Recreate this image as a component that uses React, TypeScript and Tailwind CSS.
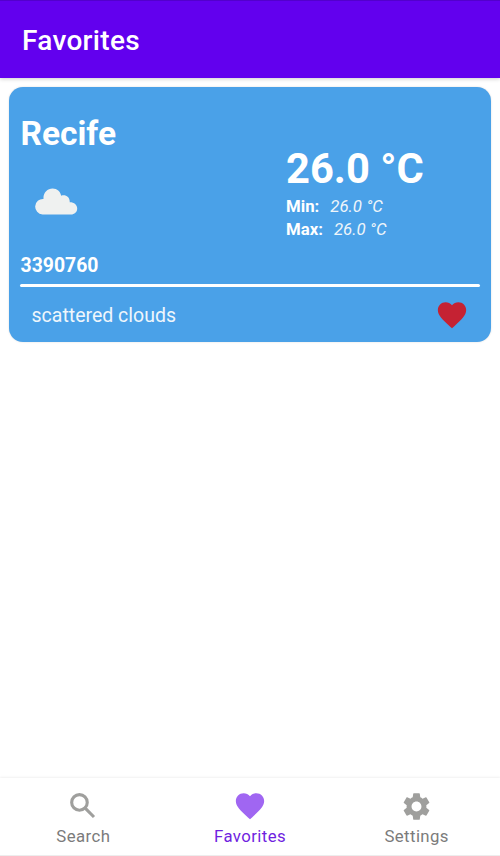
import type { ReactNode } from 'react';
import { MdFavorite, MdSettings } from 'react-icons/md';

function CloudIcon() {
  return (
    <svg width="43" height="27" viewBox="0 0 43 27" fill="#eff1f0" aria-hidden="true">
      <path d="M7.500 26.500A7.800 7.800 0 0 1 8.500 10.900C8 4.800 12.300.4 17.600.4c4.500 0 7.700 2.900 8.600 7.300 4.300-1.600 9 1.300 8.500 6.600 4.300-.1 7.500 2.500 7.500 6.200 0 3.500-2.700 6-6.400 6z" />
    </svg>
  );
}

function SearchIcon() {
  return (
    <svg className="size-[34px]" viewBox="0 0 24 24" fill="none" stroke="currentColor" strokeWidth="2.2" aria-hidden="true">
      <circle cx="9.5" cy="9.5" r="5.5" />
      <path d="M13.700 13.700l6.050 6.050" />
    </svg>
  );
}

function Range({ label, value }: { label: string; value: string }) {
  return (
    <div className="flex h-[23px] items-center gap-[11px] whitespace-nowrap text-[16.8px] leading-[23px]">
      <span className="font-bold">{label}</span>
      <span className="italic text-[#eef5fa]">{value}</span>
    </div>
  );
}

function WeatherCard() {
  return (
    <section className="ml-[9px] mr-[9.5px] mt-[9px] flex h-[255px] flex-col rounded-[14px] bg-[#4aa1e8] px-[11px] text-white shadow-[0_0_2px_rgba(0,0,0,0.15)]">
      <div className="flex h-[197px]">
        <div className="flex w-[266px] flex-col">
          <h2 className="mt-[27px] h-10 pl-[0.5px] text-[33.5px] font-bold leading-10">Recife</h2>
          <div className="ml-[15px] mt-[33.5px] h-[27px]">
            <CloudIcon />
          </div>
          <p className="mt-[39px] pl-[0.5px] text-[19.4px] font-bold leading-6">3390760</p>
        </div>
        <div className="flex flex-col">
          <p className="mt-[56px] h-[52px] whitespace-nowrap text-[41.7px] font-bold leading-[52px]">26.0 °C</p>
          <Range label="Min:" value="26.0 °C" />
          <Range label="Max:" value="26.0 °C" />
        </div>
      </div>
      <div className="h-[3px] rounded-full bg-white" />
      <div className="flex flex-1 items-center justify-between pl-[11.5px] pr-[11px]">
        <span className="pt-0.5 text-[19.5px] text-[#eef6fc]">scattered clouds</span>
        <MdFavorite className="size-[34px] text-[#c52233]" />
      </div>
    </section>
  );
}

function Tab({ icon, label, active = false }: { icon: ReactNode; label: string; active?: boolean }) {
  return (
    <button className={`flex flex-1 flex-col items-center pt-[11px] ${active ? 'text-[#a066f2]' : 'text-[#9f9f9d]'}`}>
      <span className="flex h-[34px] items-center">{icon}</span>
      <span
        className={`mt-[2px] text-[16.8px] leading-[22px] tracking-[0.4px] ${active ? 'text-[#701fdf]' : 'text-[#7b7b7b]'}`}
      >
        {label}
      </span>
    </button>
  );
}

export default function App() {
  return (
    <div className="flex h-[856px] w-[500px] flex-col overflow-hidden bg-white font-['Roboto',sans-serif]">
      <header className="flex h-[78px] shrink-0 items-center border-t border-[#5300cc] bg-[#6200ee] pl-[22px] pt-[3px] text-white shadow-[0_1px_4px_rgba(0,0,0,0.2)]">
        <h1 className="text-[28px] font-medium tracking-[0.3px]">Favorites</h1>
      </header>
      <main className="flex-1">
        <WeatherCard />
      </main>
      <nav className="flex h-[78px] shrink-0 border-b border-[#ededed] bg-white shadow-[0_-1px_2px_rgba(0,0,0,0.06)]">
        <Tab icon={<SearchIcon />} label="Search" />
        <Tab icon={<MdFavorite className="size-[34px]" />} label="Favorites" active />
        <Tab icon={<MdSettings className="size-[33px]" />} label="Settings" />
      </nav>
    </div>
  );
}
